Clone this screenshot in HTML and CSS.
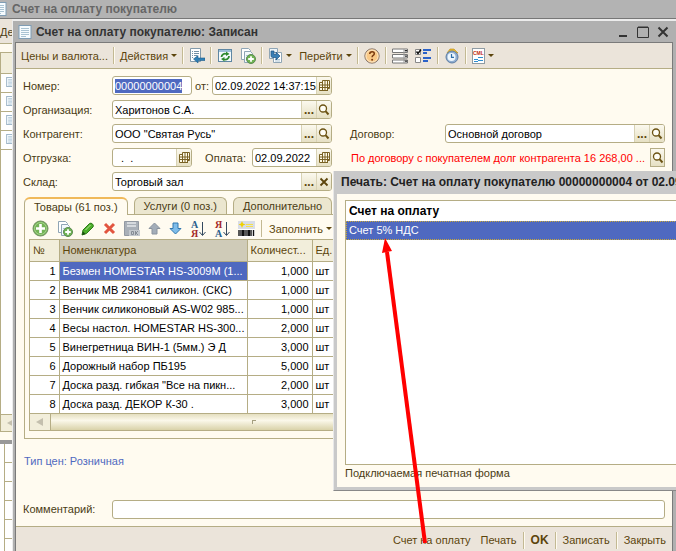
FILE: index.html
```
<!DOCTYPE html>
<html lang="ru">
<head>
    <meta charset="UTF-8">
    <meta name="viewport" content="width=device-width, initial-scale=1.0">
    <title>Счет на оплату покупателю</title>
    <link rel="stylesheet" href="styles.css">
</head>
<body>

<!-- Shared icons -->
<svg class="defs" width="0" height="0" aria-hidden="true">
    <symbol id="i-doc" viewBox="0 0 14 14">
        <rect x="1" y=".5" width="12" height="13" fill="#f6fbfe" stroke="#7f9db5"/>
        <path d="M3 3.5h8M3 5.5h8M3 7.5h8M3 9.5h8M3 11.5h5" stroke="#a9c3d3"/>
    </symbol>
    <symbol id="i-cal" viewBox="0 0 11 12">
        <path d="M3.5.5h7v8h-2v2h-8v-8h3z" fill="#fffbe8" stroke="#7a6224"/>
        <path d="M.5 5h10M.5 7.5h10M3.5 1v10M6 1v10M8.5 1v10" stroke="#7a6224"/>
    </symbol>
    <symbol id="i-search" viewBox="0 0 12 12">
        <circle cx="5" cy="4.500" r="3.500" fill="#fffef6" stroke="#6b5212" stroke-width="1.3"/>
        <path d="M7.5 7.2l3 3.3" stroke="#6b5212" stroke-width="2"/>
    </symbol>
    <symbol id="i-add-doc" viewBox="0 0 16 16">
        <path d="M1.5.5h7l2 2v9h-9z" fill="#fff" stroke="#8fa5b5"/>
        <path d="M4.5 3.5h6l2 2v9h-8z" fill="#f4f9fc" stroke="#8fa5b5"/>
        <path d="M6 7.5h4M6 9.5h3" stroke="#a9c3d3"/>
        <circle cx="11" cy="11" r="4.5" fill="#6fb353" stroke="#5c8a52"/>
        <path d="M11 8.2v5.6M8.2 11h5.6" stroke="#fff" stroke-width="1.8"/>
    </symbol>
</svg>

<div class="desktop">

    <!-- Journal window behind -->
    <section class="journal">
        <div class="journal-title"><svg class="ic14"><use href="#i-doc"/></svg>Счет на оплату покупателю</div>
        <div class="journal-bar">Де</div>
        <div class="journal-body">
            <div class="journal-head"></div>
            <div class="journal-row"><svg class="ic10"><use href="#i-doc"/></svg></div>
            <div class="journal-row"><svg class="ic10"><use href="#i-doc"/></svg></div>
            <div class="journal-row"><svg class="ic10"><use href="#i-doc"/></svg></div>
            <div class="journal-row"><svg class="ic10"><use href="#i-doc"/></svg></div>
            <div class="journal-space"></div>
            <div class="scroll"><span class="scroll-btn"></span></div>
        </div>
        <div class="journal-grid">
            <div></div><div></div><div></div><div></div><div></div><div></div>
        </div>
    </section>

    <!-- Invoice window -->
    <section class="window">
        <header class="title">
            <svg class="ic14"><use href="#i-doc"/></svg>
            <h1>Счет на оплату покупателю: Записан</h1>
            <button class="win-btn" aria-label="Свернуть"><svg width="12" height="12"><path d="M2 10h8" stroke="#333" stroke-width="2"/></svg></button>
            <button class="win-btn" aria-label="Развернуть"><svg width="12" height="12"><path d="M.5 1.5h11v10h-11zM1 1h10" fill="none" stroke="#333"/></svg></button>
            <button class="win-btn" aria-label="Закрыть окно"><svg width="12" height="12"><path d="M1.5 1.5l9 9M10.5 1.5l-9 9" stroke="#333" stroke-width="2"/></svg></button>
        </header>

        <div class="client">
            <div class="toolbar">
                <button>Цены и валюта...</button>
                <i class="sep"></i>
                <button>Действия<span class="caret"></span></button>
                <i class="sep"></i>
                <button aria-label="Перечитать">
                    <svg width="16" height="16"><path d="M1.5.5h10v13h-10z" fill="#fff" stroke="#8199aa"/><path d="M3 3.5h1M5 3.5h5M3 5.5h1M5 5.5h5M3 7.5h1M5 7.5h3M3 9.5h1" stroke="#7490a5"/><path d="M4.5 11l4.500-3.500v2.500h7v2.500h-7v2.500z" fill="#2f7fb5" stroke="#1d5d8c" stroke-width=".6"/></svg>
                </button>
                <i class="sep"></i>
                <button aria-label="Обновить">
                    <svg width="16" height="16"><rect x="1.5" y="1.5" width="13" height="12" fill="#f4fafc" stroke="#5f87a3"/><path d="M2 3h12" stroke="#9cc0d8" stroke-width="2"/><path d="M4.5 9a3.500 3.500 0 0 1 5-3" fill="none" stroke="#2f8a2f" stroke-width="1.8"/><path d="M9 3.500l3.500 2.500-3.500 2z" fill="#2f8a2f"/><path d="M12 8a3.500 3.500 0 0 1-5 3.300" fill="none" stroke="#2f8a2f" stroke-width="1.8"/><path d="M7.500 13.500l-3.500-2.500 3.500-2z" fill="#2f8a2f"/></svg>
                </button>
                <button aria-label="Скопировать"><svg width="16" height="16"><use href="#i-add-doc"/></svg></button>
                <i class="sep"></i>
                <button aria-label="Ввести на основании">
                    <svg width="15" height="16"><path d="M1.5.5h8v10h-8z" fill="#eef5f9" stroke="#8fa5b5"/><path d="M5.5 4.5h8v10h-8z" fill="#fff" stroke="#8fa5b5"/><path d="M7 11.5h5M7 13h5" stroke="#a9c3d3"/><path d="M3 3h3v3.500h2v-2.500l4 4-4 4v-2.500h-3.500q-1.500 0-1.500-2z" fill="#3a7fb5" stroke="#1f5582" stroke-width=".7"/></svg><span class="caret"></span>
                </button>
                <button>Перейти<span class="caret"></span></button>
                <i class="sep"></i>
                <button aria-label="Справка">
                    <svg width="16" height="16"><circle cx="8" cy="8" r="7.2" fill="#f9c987" stroke="#8a7a72"/><circle cx="8" cy="8" r="6" fill="none" stroke="#fde6c3"/><path d="M5.7 6q.2-2.200 2.400-2.200 2.200 0 2.200 1.900 0 1-1.100 1.700-1.100.7-1.100 1.900" fill="none" stroke="#7b3b10" stroke-width="1.5"/><circle cx="8.1" cy="11.700" r="1" fill="#7b3b10"/></svg>
                </button>
                <i class="sep"></i>
                <button aria-label="Реквизиты">
                    <svg width="16" height="16"><path d="M.5 1h15v3.500h-15zM.5 6.500h15v3.500h-15zM.5 12h15v3h-15z" fill="#fff" stroke="#777"/><path d="M12 1v14" stroke="#999"/><path d="M12.500 2h3l-1.500 2zM12.500 7.500h3l-1.500 2zM12.500 12.500h3l-1.500 2z" fill="#222"/></svg>
                </button>
                <button aria-label="Настройка">
                    <svg width="17" height="16"><path d="M.5 1.5h5v5h-5zM.5 9.5h5v5h-5z" fill="#fff" stroke="#888"/><path d="M1.500 3.500l1.500 2 3-4" fill="none" stroke="#111" stroke-width="1.5"/><path d="M8 2h8M8 5h4M8 10h8M8 13h5" stroke="#2a62c8" stroke-width="2"/></svg>
                </button>
                <i class="sep"></i>
                <button aria-label="Напоминание">
                    <svg width="16" height="16"><path d="M3 5l3-4 4 0 4 4z" fill="#e9b92d" stroke="#b98a14" stroke-width=".6"/><circle cx="8" cy="9" r="6" fill="#8fadd0" stroke="#5f7fa5"/><circle cx="7.500" cy="9" r="4" fill="#eef7fd"/><path d="M7.500 6v3.300h2.500" fill="none" stroke="#2f6fa8" stroke-width="1.2"/></svg>
                </button>
                <i class="sep"></i>
                <button aria-label="CML">
                    <svg width="13" height="16"><rect x=".5" y=".5" width="12" height="15" fill="#fff" stroke="#8e9ba3"/><text x="1" y="7" class="cml">CML</text><path d="M6 9.500h5M2 11.500h4M6 12.500h5M2 13.500h4" stroke="#2f8fd0"/></svg><span class="caret"></span>
                </button>
            </div>

            <form class="form">
                <div class="fields">
                    <label for="number">Номер:</label>
                    <div class="line">
                        <span class="field number"><input id="number" value="00000000004"></span>
                        <label for="date">от:</label>
                        <span class="field grow"><input id="date" value="02.09.2022 14:37:15"><button type="button" aria-label="Календарь"><svg width="11" height="12"><use href="#i-cal"/></svg></button></span>
                    </div>
                    <span></span><span></span>

                    <label for="org">Организация:</label>
                    <span class="field"><input id="org" value="Харитонов С.А."><button type="button" class="dots">...</button><button type="button" aria-label="Открыть"><svg width="12" height="12"><use href="#i-search"/></svg></button></span>
                    <span></span><span></span>

                    <label for="partner">Контрагент:</label>
                    <span class="field"><input id="partner" value="ООО &quot;Святая Русь&quot;"><button type="button" class="dots">...</button><button type="button" aria-label="Открыть"><svg width="12" height="12"><use href="#i-search"/></svg></button></span>
                    <label for="contract" class="second">Договор:</label>
                    <span class="field"><input id="contract" value="Основной договор"><button type="button" class="dots">...</button><button type="button" aria-label="Открыть"><svg width="12" height="12"><use href="#i-search"/></svg></button></span>

                    <label for="ship">Отгрузка:</label>
                    <div class="line">
                        <span class="field ship"><input id="ship" value="  .  ."><button type="button" aria-label="Календарь"><svg width="11" height="12"><use href="#i-cal"/></svg></button></span>
                        <label for="pay" class="pay-label">Оплата:</label>
                        <span class="field pay"><input id="pay" value="02.09.2022"><button type="button" aria-label="Календарь"><svg width="11" height="12"><use href="#i-cal"/></svg></button></span>
                    </div>
                    <div class="debt">
                        <span>По договору с покупателем долг контрагента 16 268,00 ...</span>
                        <button type="button" class="single" aria-label="Открыть"><svg width="12" height="12"><use href="#i-search"/></svg></button>
                    </div>

                    <label for="store">Склад:</label>
                    <span class="field"><input id="store" value="Торговый зал"><button type="button" class="dots">...</button><button type="button" aria-label="Очистить"><svg width="10" height="10"><path d="M1.5 1.5l7 7M8.5 1.5l-7 7" stroke="#5c450c" stroke-width="1.8"/></svg></button></span>
                    <span></span><span></span>
                </div>

                <div class="tabs">
                    <button type="button" class="tab active">Товары (61 поз.)</button>
                    <button type="button" class="tab">Услуги (0 поз.)</button>
                    <button type="button" class="tab">Дополнительно</button>
                </div>

                <div class="panel">
                    <div class="panel-bar">
                        <button type="button" aria-label="Добавить"><svg width="17" height="17"><circle cx="8.5" cy="8.5" r="7.5" fill="#74b357" stroke="#6f8f5f"/><circle cx="8.5" cy="8.5" r="6" fill="none" stroke="#a5d38c"/><path d="M8.5 4v9M4 8.5h9" stroke="#fff" stroke-width="2.6"/></svg></button>
                        <button type="button" aria-label="Скопировать"><svg width="16" height="16"><use href="#i-add-doc"/></svg></button>
                        <button type="button" aria-label="Изменить"><svg width="14" height="14"><path d="M1 13l1-5 6.500-6.500q1.500-1 3 .5t.5 3l-6.500 6.500z" fill="#4cae2a" stroke="#2b7a18"/><path d="M1 13l1-3.500 2.500 2.500z" fill="#1d4d12"/><path d="M4.500 8l5-5" stroke="#b5e89a"/></svg></button>
                        <button type="button" aria-label="Удалить"><svg width="13" height="13"><path d="M2 2l9 9M11 2l-9 9" stroke="#e2553f" stroke-width="3"/></svg></button>
                        <button type="button" aria-label="Сохранить"><svg width="16" height="16"><path d="M.5.5h14v14h-14z" fill="#a9b0b8" stroke="#9299a2"/><path d="M3 1h9v5h-9z" fill="#d6dade"/><path d="M3 3.500h9" stroke="#a9b0b8"/><path d="M5 9h11v6h-11z" fill="#c3c8ce"/><path d="M7.500 10.500h2v3h-2zM11.500 10v4M14 10l-2 2 2 2" fill="none" stroke="#858c95"/></svg></button>
                        <button type="button" aria-label="Вверх"><svg width="13" height="13"><path d="M6.5 1l5.500 5.500h-3v5.500h-5v-5.500h-3z" fill="#a3adb8" stroke="#8a939e"/></svg></button>
                        <button type="button" aria-label="Вниз"><svg width="13" height="13"><path d="M6.5 12l5.500-5.500h-3v-5.500h-5v5.500h-3z" fill="#7fbdea" stroke="#3178b0"/></svg></button>
                        <button type="button" aria-label="По возрастанию"><svg class="sort" width="16" height="18"><text x="1" y="8" fill="#2b5f8c">А</text><text x="1" y="17" fill="#a52a2a">Я</text><path d="M12.500 2v13M9.500 12l3 3.500 3-3.500" fill="none" stroke="#34495e"/></svg></button>
                        <button type="button" aria-label="По убыванию"><svg class="sort" width="16" height="18"><text x="1" y="8" fill="#a52a2a">Я</text><text x="1" y="17" fill="#2b5f8c">А</text><path d="M12.500 2v13M9.500 12l3 3.500 3-3.500" fill="none" stroke="#34495e"/></svg></button>
                        <button type="button" aria-label="Штрихкод"><svg width="17" height="16"><rect width="17" height="8" fill="#d9dde6"/><path d="M8 3.500h7M8 5.500h7" stroke="#f5e14a"/><path d="M4 0l1 2.500 2.500 1-2.500 1-1 2.500-1-2.500-2.500-1 2.500-1z" fill="#f0d000"/><rect y="8" width="17" height="8" fill="#fff"/><path d="M1 9v6M3 9v6M7 9v6M9 9v6M13 9v6M15.500 9v6" stroke="#111" stroke-width="1.4"/><path d="M5 9v6M11 9v6" stroke="#111" stroke-width="2"/></svg></button>
                        <i class="sep"></i>
                        <button type="button">Заполнить<span class="caret"></span></button>
                    </div>

                    <div class="grid-box">
                        <table>
                            <colgroup><col class="c-num"><col class="c-name"><col class="c-qty"><col></colgroup>
                            <thead>
                                <tr><th>№</th><th class="sorted">Номенклатура</th><th>Количест...</th><th>Ед.</th></tr>
                            </thead>
                            <tbody>
                                <tr class="current"><td>1</td><td>Безмен HOMESTAR HS-3009M (1...</td><td>1,000</td><td>шт</td></tr>
                                <tr><td>2</td><td>Венчик MB 29841 силикон. (СКС)</td><td>1,000</td><td>шт</td></tr>
                                <tr><td>3</td><td>Венчик силиконовый AS-W02 985...</td><td>1,000</td><td>шт</td></tr>
                                <tr><td>4</td><td>Весы настол. HOMESTAR HS-300...</td><td>2,000</td><td>шт</td></tr>
                                <tr><td>5</td><td>Винегретница ВИН-1 (5мм.) Э Д</td><td>3,000</td><td>шт</td></tr>
                                <tr><td>6</td><td>Дорожный набор ПБ195</td><td>5,000</td><td>шт</td></tr>
                                <tr><td>7</td><td>Доска разд. гибкая "Все на пикн...</td><td>2,000</td><td>шт</td></tr>
                                <tr><td>8</td><td>Доска разд. ДЕКОР К-30 .</td><td>3,000</td><td>шт</td></tr>
                            </tbody>
                        </table>
                        <div class="scroll"><span class="scroll-btn"></span><span class="scroll-thumb"></span></div>
                    </div>
                </div>

                <a class="price-type" href="#">Тип цен: Розничная</a>

                <div class="comment">
                    <label for="comment">Комментарий:</label>
                    <span class="field"><input id="comment"></span>
                </div>
            </form>

            <footer class="footer">
                <button>Счет на оплату</button>
                <button>Печать</button>
                <i class="sep"></i>
                <button class="ok">OK</button>
                <i class="sep"></i>
                <button>Записать</button>
                <i class="sep"></i>
                <button>Закрыть</button>
            </footer>
        </div>
    </section>

    <!-- Print form dialog -->
    <section class="dialog">
        <h2>Печать: Счет на оплату покупателю 00000000004 от 02.09.2022</h2>
        <div class="dialog-body">
            <ul class="forms">
                <li class="group">Счет на оплату</li>
                <li class="selected">Счет 5% НДС</li>
            </ul>
            <p>Подключаемая печатная форма</p>
        </div>
    </section>

    <svg class="arrow" width="60" height="310"><path d="M44 305L6 14" stroke="#f00" stroke-width="4"/><path d="M4 0l7 13-10 2z" fill="#f00"/></svg>
</div>

<script>
    document.getElementById('number').select();
</script>
</body>
</html>
```
FILE: styles.css
```
* {
    box-sizing: border-box;
}
body {
    margin: 0;
    font-family: "Liberation Sans", Arial, sans-serif;
    font-size: 11px;
    line-height: 14px;
    color: #4a3c14;
    background-color: #fffbf0;
}
button, input {
    font: inherit;
    color: inherit;
}
button {
    display: flex;
    align-items: center;
    justify-content: center;
    margin: 0;
    padding: 0;
    border: none;
    background: none;
    white-space: nowrap;
}
svg {
    display: block;
    flex: none;
}
.defs {
    position: absolute;
}
.desktop {
    position: relative;
    min-height: 100vh;
    overflow: hidden;
}
.ic14 {
    width: 14px;
    height: 14px;
}
.ic10 {
    width: 10px;
    height: 10px;
}
.cml {
    fill: #c22a10;
    font-size: 5px;
    font-weight: bold;
}
.sort {
    font-family: "Liberation Serif", serif;
    font-size: 10px;
    font-weight: bold;
}

/* Journal window */
.journal-title {
    display: flex;
    align-items: center;
    gap: 5px;
    height: 19px;
    margin-left: -7px;
    background-color: #b3b3b3;
    border-bottom: 1px solid #777;
    color: #666;
    font-size: 12px;
    font-weight: bold;
}
.journal-bar {
    height: 25px;
    padding-top: 6px;
    background-color: #ebe4da;
    border-bottom: 1px solid #b5ad85;
}
.journal-body {
    margin-top: 8px;
    border: 1px solid #b5ad85;
    background-color: #fff;
}
.journal-head {
    height: 21px;
    background-color: #f2eedb;
    border-bottom: 1px solid #b5ad85;
}
.journal-row {
    height: 19px;
    padding: 3px 5px;
    border-bottom: 1px solid #b5ad85;
}
.journal-space {
    height: 265px;
    border-bottom: 1px solid #b5ad85;
}
.journal-grid {
    margin-top: 8px;
    border-top: 4px solid #999;
    background-color: #fff;
    padding-left: 4px;
}
.journal-grid div {
    height: 19px;
    border-left: 1px solid #b5ad85;
    border-bottom: 1px solid #b5ad85;
}

/* Invoice window */
.window {
    position: absolute;
    top: 19px;
    left: 12px;
    right: 0;
    min-height: 540px;
    padding: 0 3px 0 2px;
    border-top: 2px solid #ececec;
    border-left: 1px solid #ececec;
    background-color: #b0b0b0;
}
.title {
    display: flex;
    align-items: center;
    gap: 4px;
    height: 21px;
    padding: 0 2px 0 3px;
    color: #333;
}
.title h1 {
    flex: 1;
    margin: 0;
    font-size: 12px;
}
.win-btn {
    width: 16px;
}
.client {
    border: 1px solid #7a7a7a;
    background-color: #fffbf0;
}
.toolbar {
    display: flex;
    align-items: center;
    gap: 5px;
    height: 26px;
    padding: 0 5px;
    background-color: #ebe4da;
    border-bottom: 1px solid #b5ad85;
    color: #5c450c;
}
.toolbar button + button {
    margin-left: 2px;
}
.sep {
    width: 2px;
    height: 17px;
    border-left: 1px solid #c3b993;
    border-right: 1px solid #fffbf0;
}
.caret {
    margin-left: 3px;
    border: 3px solid transparent;
    border-top-color: #5c450c;
    border-bottom: none;
}

/* Form */
.form {
    padding: 7px;
}
.fields {
    display: grid;
    grid-template-columns: 89px 220px 113px 1fr;
    gap: 5px 0;
    align-items: center;
}
.second {
    padding-left: 18px;
}
.line {
    display: flex;
    align-items: center;
    gap: 3px;
}
.field {
    display: flex;
    height: 19px;
    border: 1px solid #b5ad85;
    border-radius: 3px;
    background-color: #fff;
    overflow: hidden;
}
.field input {
    flex: 1;
    width: 0;
    min-width: 0;
    padding: 0 0 0 2px;
    border: none;
    outline: none;
    background: none;
    color: #000;
}
.field input::selection {
    background-color: #4f69c0;
    color: #fff;
}
.field button, .single {
    width: 15px;
    border-left: 1px solid #d8d2b4;
    background-image: linear-gradient(#fbf9ee, #e6e0c4);
    color: #5c450c;
}
.field .dots {
    font-weight: bold;
    font-size: 12px;
}
.number, .ship {
    width: 80px;
}
.grow {
    flex: 1;
}
.pay-label {
    margin-left: auto;
    padding-right: 3px;
}
.pay {
    width: 80px;
}
.debt {
    grid-column: 3 / 5;
    display: flex;
    align-items: center;
    justify-content: space-between;
    padding-left: 19px;
    color: #f00;
    white-space: nowrap;
}
.single {
    height: 19px;
    border: 1px solid #b5ad85;
}

/* Tabs and goods table */
.tabs {
    display: flex;
    gap: 6px;
    margin: 6px 1px 0;
}
.tab {
    height: 17px;
    padding: 0 9px;
    border: 1px solid #b5ad85;
    border-bottom: none;
    border-radius: 6px 6px 0 0;
    background-color: #ebe6cf;
}
.tab.active {
    position: relative;
    z-index: 1;
    height: 18px;
    margin-bottom: -1px;
    border-top: 2px solid #f0b95a;
    background-color: #fffbf0;
}
.panel {
    margin: 0 1px;
    padding: 3px 4px 7px;
    border: 1px solid #b5ad85;
}
.panel-bar {
    display: flex;
    align-items: center;
    gap: 8px;
    height: 21px;
    padding: 0 3px;
    color: #5c450c;
}
.panel-bar .sep {
    margin: 0 -2px;
}
.grid-box {
    border: 1px solid #b5ad85;
    background-color: #fff;
}
table {
    width: 100%;
    table-layout: fixed;
    border-collapse: collapse;
}
.c-num {
    width: 29px;
}
.c-name {
    width: 188px;
}
.c-qty {
    width: 65px;
}
th, td {
    height: 19px;
    padding: 0 3px;
    border-right: 1px solid #b5ad85;
    border-bottom: 1px solid #b5ad85;
    white-space: nowrap;
    overflow: hidden;
    text-align: left;
    color: #000;
}
th {
    height: 21px;
    background-color: #f2eedb;
    color: #5c450c;
    font-weight: normal;
}
th.sorted {
    background-color: #cfcbb8;
}
td:nth-child(1), td:nth-child(3) {
    text-align: right;
}
.current td:nth-child(2) {
    background-color: #4f69c0;
    color: #fff;
}
.scroll {
    display: flex;
    align-items: center;
    height: 16px;
    background-image: linear-gradient(#e5dfc0, #fbf8ea 40%, #d9d2a9);
}
.scroll-btn {
    display: flex;
    align-items: center;
    width: 21px;
    height: 100%;
    padding-left: 6px;
    border-right: 1px solid #b5ad85;
    background-color: #f2eedb;
}
.scroll-btn::before {
    content: "";
    border: 4px solid transparent;
    border-right: 7px solid #c4bfae;
    border-left: none;
}
.scroll-thumb {
    width: 4px;
    height: 4px;
    margin-left: 201px;
    border-top: 1px solid #a59f80;
    border-left: 1px solid #a59f80;
}
.price-type {
    display: block;
    margin: 15px 1px 0;
    color: #4f69c0;
    text-decoration: none;
}
.comment {
    display: grid;
    grid-template-columns: 89px 1fr;
    align-items: center;
    margin-top: 32px;
}
.footer {
    display: flex;
    align-items: center;
    justify-content: flex-end;
    gap: 6px;
    height: 28px;
    padding-right: 6px;
    background-color: #ebe4da;
    border-top: 1px solid #b5ad85;
    color: #5c450c;
}
.footer button + button {
    margin-left: 4px;
}
.ok {
    font-size: 12px;
    font-weight: bold;
}

/* Print form dialog */
.dialog {
    position: absolute;
    top: 171px;
    left: 333px;
    right: -60px;
    padding: 0 0 3px 3px;
    border-left: 1px solid #e8e8e8;
    border-bottom: 1px solid #888;
    background-color: #c9c9c9;
    color: #222;
}
.dialog h2 {
    margin: 0;
    padding-left: 4px;
    font-size: 12px;
    line-height: 23px;
    white-space: nowrap;
    overflow: hidden;
}
.dialog-body {
    padding: 6px 8px;
    background-color: #fffbf0;
}
.forms {
    min-height: 265px;
    margin: 0;
    padding: 1px 0;
    border: 1px solid #b5ad85;
    background-color: #fff;
    list-style: none;
}
.forms li {
    padding: 0 3px;
    line-height: 19px;
}
.forms .group {
    font-size: 12px;
    font-weight: bold;
    color: #000;
}
.forms .selected {
    background-color: #4f69c0;
    color: #fff;
    outline: 1px dotted #c9a83a;
    outline-offset: -1px;
}
.dialog p {
    margin: 1px 0;
    color: #4a3c14;
}
.arrow {
    position: absolute;
    top: 238px;
    left: 381px;
    pointer-events: none;
}
```
